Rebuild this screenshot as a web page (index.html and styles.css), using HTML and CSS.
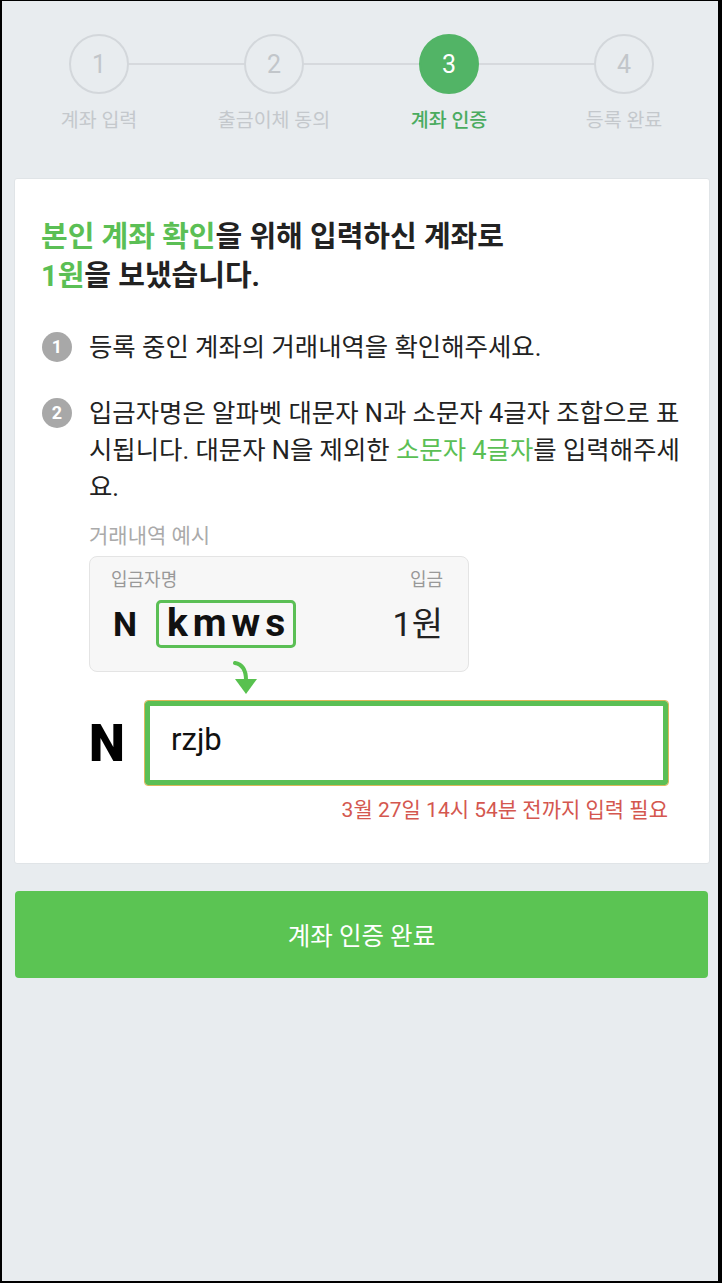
FILE: index.html
```html
<!DOCTYPE html>
<html lang="ko">
<head>
    <meta charset="UTF-8">
    <meta name="viewport" content="width=device-width, initial-scale=1.0">
    <title>계좌 인증</title>
    <link rel="stylesheet" href="styles.css">
</head>
<body>
    <div class="screen">

        <!-- 단계 표시 -->
        <div class="stepper">
            <div class="step">
                <div class="step-circle">1</div>
                <div class="step-label">계좌 입력</div>
            </div>
            <div class="step">
                <div class="step-circle">2</div>
                <div class="step-label">출금이체 동의</div>
            </div>
            <div class="step active">
                <div class="step-circle">3</div>
                <div class="step-label">계좌 인증</div>
            </div>
            <div class="step">
                <div class="step-circle">4</div>
                <div class="step-label">등록 완료</div>
            </div>
        </div>

        <!-- 인증 카드 -->
        <div class="card">
            <h2 class="headline">
                <span class="green">본인 계좌 확인</span>을 위해 입력하신 계좌로<br>
                <span class="green">1원</span>을 보냈습니다.
            </h2>

            <ol class="guide-list">
                <li class="guide-item">
                    <span class="badge">1</span>
                    <div class="guide-text">등록 중인 계좌의 거래내역을 확인해주세요.</div>
                </li>
                <li class="guide-item">
                    <span class="badge">2</span>
                    <div class="guide-text">
                        <p class="guide-para">입금자명은 알파벳 대문자 N과 소문자 4글자 조합으로 표시됩니다. 대문자 N을 제외한 <span class="green">소문자 4글자</span>를 입력해주세요.</p>

                        <div class="example">
                            <div class="example-title">거래내역 예시</div>
                            <div class="example-box">
                                <div class="example-head">
                                    <span>입금자명</span>
                                    <span>입금</span>
                                </div>
                                <div class="example-row">
                                    <span class="example-n">N</span>
                                    <span class="example-code">kmws</span>
                                    <span class="example-amount">1원</span>
                                </div>
                            </div>

                            <svg class="arrow" width="26" height="34" viewBox="0 0 26 34">
                                <path d="M2 2 Q13 4 13 19" fill="none" stroke="#58c14f" stroke-width="4" stroke-linecap="round"/>
                                <path d="M2 18 L24 18 L13 33 Z" fill="#58c14f"/>
                            </svg>

                            <div class="code-row">
                                <span class="code-n">N</span>
                                <div class="code-input">rzjb</div>
                            </div>
                            <div class="deadline">3월 27일 14시 54분 전까지 입력 필요</div>
                        </div>
                    </div>
                </li>
            </ol>
        </div>

        <button class="submit-button">계좌 인증 완료</button>
    </div>
</body>
</html>
```

FILE: styles.css
```css
/* 기본 */
body {
    margin: 0;
    padding: 0;
    font-family: Roboto, 'Noto Sans CJK KR', sans-serif;
    color: #222;
}

.screen {
    box-sizing: border-box;
    height: 1283px;
    border-style: solid;
    border-color: #000;
    border-width: 1px 4px 2px 2px;
    background-color: #e8ecef;
}

.green {
    color: #5bbf55;
}

/* 단계 표시 */
.stepper {
    display: flex;
    justify-content: center;
    padding: 33px 0 44px 3px;
}

.step {
    position: relative;
    width: 175px;
    display: flex;
    flex-direction: column;
    align-items: center;
}

.step + .step::before {
    content: '';
    position: absolute;
    top: 29px;
    left: -50%;
    width: 100%;
    height: 2px;
    background-color: #d6d9dd;
}

.step-circle {
    position: relative;
    z-index: 1;
    box-sizing: border-box;
    width: 60px;
    height: 60px;
    border: 2px solid #d3d7db;
    border-radius: 50%;
    background-color: #e8ecef;
    display: flex;
    justify-content: center;
    align-items: center;
    font-size: 25px;
    color: #c2c6ca;
}

.step-label {
    margin-top: 14px;
    font-size: 19.5px;
    line-height: 26px;
    color: #c4c8cc;
}

.step.active .step-circle {
    background-color: #52b466;
    border-color: #52b466;
    color: #fff;
}

.step.active .step-label {
    color: #4aab5f;
    font-weight: 500;
}

/* 카드 */
.card {
    margin: 0 8px 0 12px;
    padding: 39px 26px 40px 26px;
    background-color: #fff;
    border: 1px solid #e0e4e7;
    border-radius: 3px;
}

.headline {
    margin: 0;
    font-size: 29px;
    line-height: 39px;
    font-weight: 700;
    color: #222;
}

.guide-list {
    list-style: none;
    margin: 33px 0 0;
    padding: 0;
}

.guide-item {
    display: flex;
    gap: 17px;
    font-size: 25.4px;
    line-height: 37px;
    color: #222;
}

.guide-item + .guide-item {
    margin-top: 29px;
}

.badge {
    flex: none;
    width: 30px;
    height: 30px;
    margin: 3px 0 0 1px;
    border-radius: 50%;
    background-color: #a8a8a8;
    color: #fff;
    font-size: 18px;
    font-weight: 700;
    line-height: 30px;
    text-align: center;
}

.guide-text {
    flex: 1;
}

.guide-para {
    margin: 0;
}

.guide-para .green {
    display: inline-block;
    line-height: 37px;
}

/* 거래내역 예시 */
.example {
    padding-right: 15px;
}

.example-title {
    margin-top: 17px;
    font-size: 21px;
    line-height: 26px;
    color: #aaa;
}

.example-box {
    box-sizing: border-box;
    width: 380px;
    margin-top: 7px;
    padding: 11px 25px 23px 21px;
    background-color: #f7f7f7;
    border: 1px solid #e4e4e4;
    border-radius: 8px;
}

.example-head {
    display: flex;
    justify-content: space-between;
    font-size: 18px;
    line-height: 24px;
    color: #999;
}

.example-row {
    display: flex;
    align-items: center;
    margin-top: 8px;
}

.example-n {
    font-size: 34px;
    font-weight: 700;
    color: #111;
    margin-left: 2px;
}

.example-code {
    box-sizing: border-box;
    height: 48px;
    margin-left: 19px;
    padding: 0 3px 0 8px;
    border: 3px solid #5bbf55;
    border-radius: 5px;
    font-size: 39px;
    line-height: 40px;
    font-weight: 700;
    letter-spacing: 5px;
    color: #111;
}

.example-amount {
    margin-left: auto;
    font-size: 34px;
    color: #222;
}

.arrow {
    display: block;
    margin: -11px 0 0 144px;
}

.code-row {
    display: flex;
    align-items: center;
    margin-top: 6px;
}

.code-n {
    width: 56px;
    font-size: 51px;
    font-weight: 900;
    color: #000;
}

.code-input {
    flex: 1;
    box-sizing: border-box;
    height: 84px;
    padding-left: 21px;
    border: 5px solid #5bbf55;
    border-radius: 3px;
    outline: 1px solid #dcb75a;
    font-size: 31px;
    line-height: 68px;
    color: #111;
}

.deadline {
    margin-top: 12px;
    text-align: right;
    font-size: 21px;
    line-height: 26px;
    color: #d4574f;
}

/* 버튼 */
.submit-button {
    display: block;
    box-sizing: border-box;
    width: calc(100% - 23px);
    height: 87px;
    margin: 27px 10px 0 13px;
    border: none;
    border-radius: 4px;
    background-color: #5bc453;
    color: #fff;
    font-family: Roboto, 'Noto Sans CJK KR', sans-serif;
    font-size: 24.5px;
}
```
